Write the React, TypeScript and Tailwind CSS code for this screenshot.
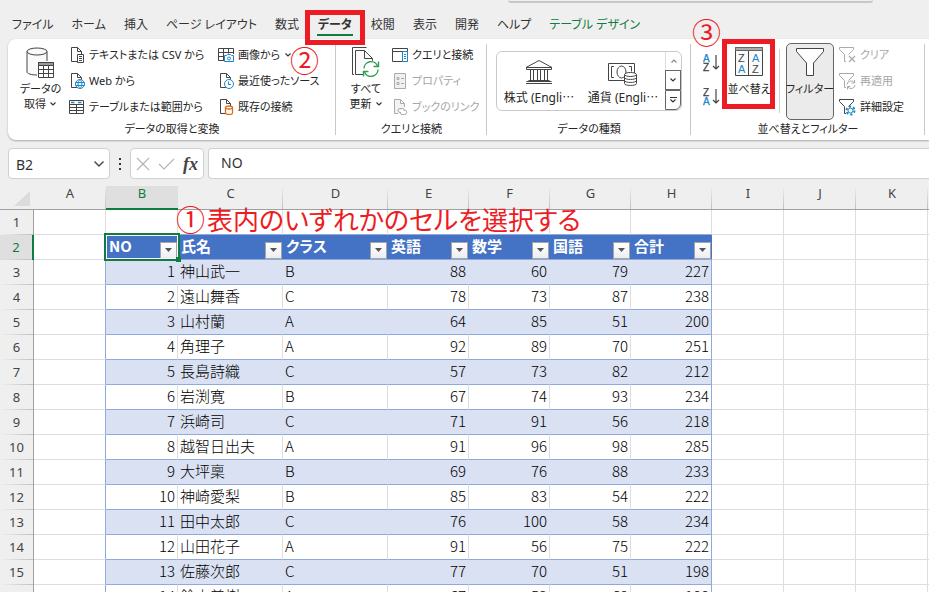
import type { ReactNode } from "react";

const UI = "font-['Noto_Sans','Noto_Sans_CJK_JP',sans-serif] [font-feature-settings:'palt']";

const TABS = [
  "ファイル", "ホーム", "挿入", "ページ レイアウト", "数式", "データ",
  "校閲", "表示", "開発", "ヘルプ", "テーブル デザイン",
];

const COLUMNS = [
  { name: "A", width: 72 },
  { name: "B", width: 72 },
  { name: "C", width: 105 },
  { name: "D", width: 105 },
  { name: "E", width: 81 },
  { name: "F", width: 81 },
  { name: "G", width: 81 },
  { name: "H", width: 81 },
  { name: "I", width: 72 },
  { name: "J", width: 72 },
  { name: "K", width: 72 },
  { name: "L", width: 72 },
];

const FIELDS = ["NO", "氏名", "クラス", "英語", "数学", "国語", "合計"];

const RECORDS: (string | number)[][] = [
  [1, "神山武一", "B", 88, 60, 79, 227],
  [2, "遠山舞香", "C", 78, 73, 87, 238],
  [3, "山村蘭", "A", 64, 85, 51, 200],
  [4, "角理子", "A", 92, 89, 70, 251],
  [5, "長島詩織", "C", 57, 73, 82, 212],
  [6, "岩渕寛", "B", 67, 74, 93, 234],
  [7, "浜崎司", "C", 71, 91, 56, 218],
  [8, "越智日出夫", "A", 91, 96, 98, 285],
  [9, "大坪稟", "B", 69, 76, 88, 233],
  [10, "神崎愛梨", "B", 85, 83, 54, 222],
  [11, "田中太郎", "C", 76, 100, 58, 234],
  [12, "山田花子", "A", 91, 56, 75, 222],
  [13, "佐藤次郎", "C", 77, 70, 51, 198],
  [14, "鈴木美樹", "A", 67, 53, 68, 188],
];

/* ---------- icons ---------- */

function Icon({ w = 16, h = 16, children }: { w?: number; h?: number; children: ReactNode }) {
  return (
    <svg width={w} height={h} viewBox={`0 0 ${w} ${h}`} fill="none" stroke="#444" className="shrink-0" aria-hidden="true">
      {children}
    </svg>
  );
}

const Chevron = () => (
  <svg width="8" height="6" viewBox="0 0 8 6" fill="none" stroke="#333" className="inline-block shrink-0" aria-hidden="true">
    <path d="M1.5 1.5 4 4l2.5-2.5" strokeWidth="1.1" />
  </svg>
);

const PageShape = () => <path d="M8 14.5H2.5V.5h6l4 4V7M8.5.5v4h4" />;

const DatabaseIcon = () => (
  <Icon w={30} h={32}>
    <path d="M1 4.5V25c0 1.600 4 3 10 3h10V4.500z" fill="#fafafa" stroke="none" />
    <ellipse cx="11" cy="4.5" rx="10" ry="3.5" fill="#fafafa" />
    <path d="M1 4.5V25c0 1.6 4 3 10 3M21 4.5V14" />
    <path d="M12.5 15.5h15v15h-15z" fill="#fff" />
    <path d="M12.5 15.5h15v3h-15z" fill="#999" />
    <path d="M12.5 22.5h15M12.5 26.5h15M17.5 18v12M22.5 18v12" />
  </Icon>
);

const TextFileIcon = () => (
  <Icon>
    <PageShape />
    <path d="M8.5 7.5h6v8h-6z" fill="#fff" />
    <path d="M10 9.5h3M10 11.5h3M10 13.5h3" />
  </Icon>
);

const WebIcon = () => (
  <Icon>
    <PageShape />
    <circle cx="11" cy="11" r="4.5" fill="#fff" stroke="#1e86c8" />
    <path d="M6.5 9.5h9M6.5 12.5h9M11 6.5c-2.6 3-2.6 6 0 9M11 6.5c2.6 3 2.6 6 0 9" stroke="#1e86c8" />
  </Icon>
);

const RangeIcon = () => (
  <Icon>
    <path d="M.5 1.5h14v13H.5zM.5 5.5h14M.5 8.5h14M.5 11.5h14M7.5 5.5v9" />
    <path d="M2 3.5h3.5M9 3.5h3.5" stroke="#1e86c8" strokeWidth="1.6" />
  </Icon>
);

const PictureIcon = () => (
  <Icon>
    <path d="M.5 1.5h15v12H.5zM.5 5.5h15M.5 9.5h8M5.5 1.5v12M10.5 1.5v5" />
    <path d="M6 7h10v9H6z" fill="#fff" stroke="none" />
    <path d="M6.5 8.5h2l1-1h3l1 1h2v6h-9z" stroke="#1e86c8" fill="#fff" />
    <circle cx="11" cy="11.5" r="1.5" stroke="#1e86c8" />
  </Icon>
);

const RecentIcon = () => (
  <Icon>
    <PageShape />
    <circle cx="11" cy="11" r="4.5" fill="#fff" stroke="#1e86c8" />
    <path d="M10.5 8.5v3H13" stroke="#1e86c8" />
  </Icon>
);

const ExistingIcon = () => (
  <Icon>
    <PageShape />
    <path d="M7.5 8.5V14c0 2 7 2 7 0V8.5" fill="#fff" stroke="#d86c16" strokeWidth="1.3" />
    <ellipse cx="11" cy="8.5" rx="3.5" ry="1.5" fill="#fff" stroke="#d86c16" strokeWidth="1.3" />
  </Icon>
);

const RefreshIcon = () => (
  <Icon w={30} h={32}>
    <path d="M3 27.5H1.5V.5h14" />
    <path d="M12 27.5H4.5v-24h9l8 8V15" fill="#fafafa" />
    <path d="M13.5 3.5v8h8" />
    <circle cx="20" cy="22" r="8.5" fill="#fff" stroke="none" />
    <path d="M13 21.5a7 7 0 0 1 13.5-2.5M27 22.5A7 7 0 0 1 13.5 25" stroke="#2f9e4f" strokeWidth="1.4" />
    <path d="M27.5 14.5v5h-5M12.5 29.5v-5h5" stroke="#2f9e4f" strokeWidth="1.4" />
  </Icon>
);

const QueryIcon = () => (
  <Icon>
    <path d="M.5 1.5h15v13H.5zM.5 4.5h15" />
    <path d="M10.5 4.5h5v10h-5z" stroke="#1e86c8" fill="#fff" />
    <path d="M12 7.5h2M12 9.5h2M12 11.5h2" stroke="#1e86c8" />
  </Icon>
);

const PropertyIcon = () => (
  <Icon>
    <path d="M2.5.5h11v15h-11z" stroke="#aaa" fill="#f0f0f0" />
    <path d="M5 4.5h2v2H5zM5 9.5h2v2H5zM9 5.5h3M9 10.5h3" stroke="#aaa" />
  </Icon>
);

const LinkIcon = () => (
  <Icon>
    <path d="M6 14.5H2.5V.5h6l4 4V8M8.5.5v4h4" stroke="#aaa" fill="#f3f3f3" />
    <path d="M9 13.5H8a2 2 0 0 1 0-4h2.5a2 2 0 0 1 2 2M11.5 11h1a2 2 0 0 1 0 4.5H10a2 2 0 0 1-2-2" stroke="#aaa" />
  </Icon>
);

const BankIcon = () => (
  <Icon w={28} h={26}>
    <path d="M1 8.5 14 1.5l13 7zM1.5 8.5v2h25v-2M3.5 21.5h21M1 24.5h26M1.5 22.5h25" />
    <path d="M5.5 11v10M8.5 11v10M12.5 11v10M15.5 11v10M19.5 11v10M22.5 11v10" />
  </Icon>
);

const CurrencyIcon = () => (
  <Icon w={32} h={28}>
    <path d="M1.5 4.5h26v17h-26z" />
    <path d="M7 7.5H4.5v11H7M22 7.5h2.5v5" />
    <ellipse cx="14.5" cy="13" rx="4.5" ry="6" />
    <path d="M17.5 15.5v9c0 2.6 12 2.6 12 0v-9" fill="#fff" />
    <ellipse cx="23.5" cy="15.5" rx="6" ry="2" fill="#fff" />
    <path d="M17.5 18.5c0 2.6 12 2.6 12 0M17.5 21.5c0 2.6 12 2.6 12 0" />
  </Icon>
);

function SortOrderIcon({ top, bottom }: { top: string; bottom: string }) {
  const color = (c: string) => (c === "A" ? "#1e86c8" : "#444");
  return (
    <svg width="17" height="18" viewBox="0 0 17 18" className="font-['Liberation_Sans',sans-serif] text-[10px]" aria-hidden="true">
      <text x="0" y="8" fill={color(top)} stroke={color(top)} strokeWidth=".3">{top}</text>
      <text x="0" y="17" fill={color(bottom)} stroke={color(bottom)} strokeWidth=".3">{bottom}</text>
      <path d="M13 1v14M10 12l3 3 3-3" fill="none" stroke="#444" strokeWidth="1.2" />
    </svg>
  );
}

const SortDialogIcon = () => (
  <svg width="28" height="29" viewBox="0 0 28 29" className="font-['Liberation_Sans',sans-serif] text-[11px]" aria-hidden="true">
    <path d="M.5.5h27v28H.5z" fill="#fafafa" stroke="#444" />
    <path d="M.5.5h27v3H.5z" fill="#aaa" stroke="#666" />
    <path d="M13.5 4v24" stroke="#444" />
    <text x="3" y="15" fill="#444">Z</text>
    <text x="3" y="26" fill="#1e86c8">A</text>
    <text x="17" y="15" fill="#1e86c8">A</text>
    <text x="17" y="26" fill="#444">Z</text>
  </svg>
);

const FilterIcon = () => (
  <Icon w={28} h={30}>
    <path d="M.5 1.5h27v3L17.5 16v12.5h-7V16L.5 4.5z" fill="#fff" />
  </Icon>
);

function SmallFilter({ muted, children }: { muted?: boolean; children: ReactNode }) {
  return (
    <Icon w={17} h={17}>
      <path d="M7 14.5H5.5v-7l-5-5v-2h14v2l-5 5" stroke={muted ? "#aaa" : "#444"} />
      {children}
    </Icon>
  );
}

const ClearIcon = () => (
  <SmallFilter muted><path d="m10 9 6 6M16 9l-6 6" stroke="#aaa" strokeWidth="1.3" /></SmallFilter>
);

const ReapplyIcon = () => (
  <SmallFilter muted>
    <path d="M8 11.5a4 4 0 0 1 7.5-1.5M16 12a4 4 0 0 1-7.5 1.5M15.5 7v3h-3M8.5 16.5v-3h3" stroke="#aaa" />
  </SmallFilter>
);

const AdvancedIcon = () => (
  <SmallFilter>
    <circle cx="11.5" cy="11.5" r="4" stroke="#1e86c8" strokeWidth="2" strokeDasharray="2.2 2" />
    <circle cx="11.5" cy="11.5" r="2.5" stroke="#1e86c8" />
  </SmallFilter>
);

/* ---------- ribbon ---------- */

function SmallCommand({ icon, label, disabled, menu }: { icon: ReactNode; label: string; disabled?: boolean; menu?: boolean }) {
  return (
    <button disabled={disabled} className="flex h-[26px] items-center gap-1 whitespace-nowrap text-[#262626] disabled:text-[#a6a6a6]">
      {icon}
      {label}
      {menu && <Chevron />}
    </button>
  );
}

function BigCommand({ icon, lines, className = "" }: { icon: ReactNode; lines: string[]; className?: string }) {
  return (
    <button className={`flex shrink-0 flex-col items-center leading-[15px] whitespace-nowrap ${className}`}>
      <span className="mb-[2px] flex h-8 items-start">{icon}</span>
      {lines[0]}
      {lines[1] && <span className="flex items-center gap-[3px]">{lines[1]}<Chevron /></span>}
    </button>
  );
}

function Group({ label, className, children }: { label: string; className: string; children: ReactNode }) {
  return (
    <section aria-label={label} className={`relative flex shrink-0 flex-col ${className}`}>
      <div className="flex h-[78px]">{children}</div>
      <p className="text-center leading-[18px]">{label}</p>
      <span className="absolute top-[2px] right-0 bottom-[3px] w-px bg-[#c8c8c8]" />
    </section>
  );
}

function DataType({ icon, label }: { icon: ReactNode; label: string }) {
  return (
    <button className="flex flex-1 flex-col items-center justify-between pt-[7px] pb-1 text-xs leading-4 whitespace-nowrap">
      {icon}
      <span>{label}<span className="font-['Noto_Sans_CJK_JP',sans-serif]">…</span></span>
    </button>
  );
}

function Ribbon() {
  return (
    <div className="ml-2 flex shrink-0 overflow-hidden rounded-l-lg bg-white pt-[3px] pb-[2px] text-[11px] text-[#262626] shadow-[0_1px_2px_rgba(0,0,0,0.3)]">
      <Group label="データの取得と変換" className="w-[328px]">
        <BigCommand icon={<DatabaseIcon />} lines={["データの", "取得"]} className="w-[61px] pt-[5px] pl-1" />
        <div className="flex w-[149px] flex-col items-start">
          <SmallCommand icon={<TextFileIcon />} label="テキストまたは CSV から" />
          <SmallCommand icon={<WebIcon />} label="Web から" />
          <SmallCommand icon={<RangeIcon />} label="テーブルまたは範囲から" />
        </div>
        <div className="flex flex-col items-start">
          <SmallCommand icon={<PictureIcon />} label="画像から" menu />
          <SmallCommand icon={<RecentIcon />} label="最近使ったソース" />
          <SmallCommand icon={<ExistingIcon />} label="既存の接続" />
        </div>
      </Group>

      <Group label="クエリと接続" className="w-[151px]">
        <BigCommand icon={<RefreshIcon />} lines={["すべて", "更新"]} className="w-14 pt-[5px] pl-1" />
        <div className="flex flex-col items-start">
          <SmallCommand icon={<QueryIcon />} label="クエリと接続" />
          <SmallCommand icon={<PropertyIcon />} label="プロパティ" disabled />
          <SmallCommand icon={<LinkIcon />} label="ブックのリンク" disabled />
        </div>
      </Group>

      <Group label="データの種類" className="w-[204px]">
        <div className="mx-[9px] my-[9px] flex flex-1 rounded-md border border-[#c8c8c8]">
          <DataType icon={<BankIcon />} label="株式 (Engli" />
          <DataType icon={<CurrencyIcon />} label="通貨 (Engli" />
          <div className="flex w-4 flex-col">
            <button aria-label="前へ" className="flex flex-1 items-center justify-center border-l border-[#c8c8c8] opacity-60">
              <span className="flex rotate-180"><Chevron /></span>
            </button>
            <button aria-label="次へ" className="flex flex-1 items-center justify-center border border-[#666]"><Chevron /></button>
            <button aria-label="その他" className="flex flex-1 flex-col items-center justify-center rounded-br-md border border-[#666]">
              <span className="h-px w-[7px] bg-[#333]" />
              <Chevron />
            </button>
          </div>
        </div>
      </Group>

      <Group label="並べ替えとフィルター" className="w-[234px]">
        <div className="flex w-8 flex-col items-end justify-between pt-3 pr-[3px] pb-[14px]">
          <button aria-label="昇順" className="flex"><SortOrderIcon top="A" bottom="Z" /></button>
          <button aria-label="降順" className="flex"><SortOrderIcon top="Z" bottom="A" /></button>
        </div>
        <BigCommand icon={<SortDialogIcon />} lines={["並べ替え"]} className="w-[52px] pt-[5px]" />
        <span className="my-[7px] mr-[6px] ml-1 w-px bg-[#d0d0d0]" />
        <BigCommand icon={<FilterIcon />} lines={["フィルター"]} className="mt-px w-12 rounded-[5px] border border-[#666] bg-[#ebebeb] pt-[3px]" />
        <div className="ml-[5px] flex flex-col items-start">
          <SmallCommand icon={<ClearIcon />} label="クリア" disabled />
          <SmallCommand icon={<ReapplyIcon />} label="再適用" disabled />
          <SmallCommand icon={<AdvancedIcon />} label="詳細設定" />
        </div>
      </Group>
    </div>
  );
}

function TabBar() {
  return (
    <nav className="flex h-[39px] shrink-0 items-end gap-[18px] pb-1 pl-3 text-xs whitespace-nowrap text-[#333]">
      {TABS.map((tab) => {
        if (tab === "データ") {
          return (
            <button key={tab} className="relative h-5 px-px leading-5 font-bold" aria-current="page">
              {tab}
              <span className="absolute -bottom-px left-0 h-[2px] w-full bg-[#107c41]" />
              <span className="absolute -inset-x-3 -top-[5px] -bottom-[10px] z-10 border-[5px] border-[#ed1c24]" />
            </button>
          );
        }
        return (
          <button key={tab} className={tab === "テーブル デザイン" ? "h-5 leading-5 text-[#107c41]" : "h-5 leading-5"}>
            {tab}
          </button>
        );
      })}
    </nav>
  );
}

function FormulaBar() {
  return (
    <div className="mt-2 mb-[7px] flex h-[31px] shrink-0 pl-2">
      <div className="flex w-[102px] items-center rounded border border-[#d0d0d0] bg-white pr-1 pl-[7px]">
        <input aria-label="名前ボックス" defaultValue="B2" className="w-full min-w-0 pt-[3px] text-sm text-[#333] outline-none" />
        <Icon w={12} h={8}><path d="M1.5 1.5 6 6l4.5-4.5" strokeWidth="1.4" /></Icon>
      </div>
      <span className="mx-[9px] flex w-[2px] flex-col justify-center gap-[3px]">
        <span className="size-[2px] bg-[#333]" />
        <span className="size-[2px] bg-[#333]" />
        <span className="size-[2px] bg-[#333]" />
      </span>
      <div className="flex w-[74px] items-center justify-between rounded border border-[#d0d0d0] bg-white px-[5px]">
        <button aria-label="キャンセル"><Icon w={14} h={14}><path d="m1 1 12 12M13 1 1 13" stroke="#b5b5b5" strokeWidth="1.2" /></Icon></button>
        <button aria-label="入力"><Icon w={17} h={12}><path d="m1 6 5 5L16 1" stroke="#b5b5b5" strokeWidth="1.2" /></Icon></button>
        <button aria-label="関数の挿入" className="font-['Liberation_Serif',serif] text-lg leading-6 font-bold text-[#444] italic">fx</button>
      </div>
      <input aria-label="数式バー" defaultValue="NO" className="ml-1 min-w-0 flex-1 rounded-l border border-r-0 border-[#d0d0d0] bg-white pb-[2px] pl-3 text-sm text-[#333] outline-none" />
    </div>
  );
}

/* ---------- sheet ---------- */

const ROW_HEAD = "h-[25px] border-r bg-[linear-gradient(to_right,transparent,#c0c0c0)] bg-[length:100%_1px] bg-bottom bg-no-repeat p-0 pb-[2px] text-center text-[13px] font-normal";
const GRID = "h-[25px] border-r border-b border-[#dedede] p-0";

function FilterButton({ field }: { field: string }) {
  return (
    <button aria-label={`${field}のフィルター`} className="flex size-[17px] shrink-0 items-center justify-center border border-[#a5a5a5] bg-linear-to-b from-white to-[#eceef2]">
      <svg width="7" height="4" viewBox="0 0 7 4" fill="#555" aria-hidden="true"><path d="M0 0h7L3.5 4z" /></svg>
    </button>
  );
}

function RowHead({ n }: { n: number }) {
  return (
    <th
      scope="row"
      className={`${ROW_HEAD} font-['Noto_Sans',sans-serif] ${n === 2 ? "border-r-2 border-[#107c41] bg-[#dfdfdf] text-[#107c41]" : "border-[#a0a0a0] bg-[#efefef] text-[#444]"}`}
    >
      {n}
    </th>
  );
}

function Sheet() {
  return (
    <table className="w-[1000px] shrink-0 table-fixed border-separate border-spacing-0 bg-white font-['Noto_Sans_CJK_JP',sans-serif] text-[15px] leading-5 font-light text-black">
      <colgroup>
        <col style={{ width: 34 }} />
        {COLUMNS.map((c) => <col key={c.name} style={{ width: c.width }} />)}
      </colgroup>
      <thead className="bg-[#efefef]">
        <tr>
          <td className="h-6 border-b border-[#a0a0a0] p-0">
            <svg width="33" height="23" viewBox="0 0 33 23" className="block" aria-hidden="true"><path d="M14 20h16V5z" fill="#dcdcdc" /></svg>
          </td>
          {COLUMNS.map((c) => (
            <th
              key={c.name}
              scope="col"
              className={
                c.name === "B"
                  ? "h-6 border-b-2 border-[#107c41] bg-[#dfdfdf] p-0 pb-[7px] font-['Noto_Sans',sans-serif] text-[13px] leading-[15px] font-normal text-[#107c41]"
                  : "h-6 border-b border-[#a0a0a0] bg-[linear-gradient(to_bottom,transparent,#c0c0c0)] bg-[length:1px_100%] bg-right bg-no-repeat p-0 pb-2 font-['Noto_Sans',sans-serif] text-[13px] leading-[15px] font-normal text-[#444]"
              }
            >
              {c.name}
            </th>
          ))}
        </tr>
      </thead>
      <tbody>
        <tr>
          <RowHead n={1} />
          {COLUMNS.map((c, i) => (
            <td key={c.name} className={i >= 1 && i <= 7 ? "h-[25px] border-r border-b border-r-[#dedede] border-b-[#8ea9db] p-0" : GRID} />
          ))}
        </tr>
        <tr>
          <RowHead n={2} />
          <td className="h-[25px] border-r border-b border-r-[#8ea9db] border-b-[#dedede] p-0" />
          {FIELDS.map((field, i) => (
            <th key={field} scope="col" className="relative h-[25px] border-b border-[#8ea9db] bg-[#4472c4] p-0 text-left font-bold text-white">
              <div className="flex items-end justify-between pr-px pl-[3px]">
                <span className="pb-[3px] leading-5">{field}</span>
                <FilterButton field={field} />
              </div>
              {i === 0 && (
                <span className="absolute -inset-[2px] z-10 border-2 border-[#107c41] outline -outline-offset-[3px] outline-white">
                  <span className="absolute -right-[3px] -bottom-[3px] size-[5px] bg-[#107c41]" />
                </span>
              )}
            </th>
          ))}
          {[8, 9, 10, 11].map((i) => <td key={i} className={GRID} />)}
        </tr>
        {RECORDS.map((record, r) => {
          const striped = r % 2 === 0;
          return (
            <tr key={r}>
              <RowHead n={r + 3} />
              <td className="h-[25px] border-r border-b border-r-[#8ea9db] border-b-[#dedede] p-0" />
              {record.map((value, i) => {
                const edge = i === 6 ? "border-r-[#8ea9db]" : striped ? "border-r-[#d9e1f2]" : "border-r-[#dedede]";
                return (
                  <td
                    key={i}
                    className={`h-[25px] border-r border-b border-b-[#8ea9db] px-[2px] pt-0 pb-[2px] whitespace-nowrap ${edge} ${striped ? "bg-[#d9e1f2]" : ""} ${typeof value === "number" ? "text-right" : ""}`}
                  >
                    {value}
                  </td>
                );
              })}
              {[8, 9, 10, 11].map((i) => <td key={i} className={GRID} />)}
            </tr>
          );
        })}
      </tbody>
    </table>
  );
}

export default function App() {
  return (
    <div lang="ja" className={`relative flex h-screen flex-col overflow-hidden bg-[#efefef] ${UI}`}>
      <span className="absolute top-0 right-14 left-[508px] h-[3px] rounded-b-md border-b-2 border-[#c8c8c8]" />
      <TabBar />
      <Ribbon />
      <FormulaBar />
      <Sheet />

      {/* 手順の注釈 */}
      <p className="absolute top-[200px] left-[176px] z-20 flex gap-[2px] text-[26px] leading-10 whitespace-nowrap text-[#ed1c24]">
        <span className="text-[29px]">①</span>
        表内のいずれかのセルを選択する
      </p>
      <span className="absolute top-[41px] left-[290px] z-20 text-[29px] leading-10 text-[#ed1c24]">②</span>
      <span className="absolute top-[13px] left-[692px] z-20 text-[29px] leading-10 text-[#ed1c24]">③</span>
      <span className="absolute top-[39px] left-[722px] z-20 h-[70px] w-[53px] border-[5px] border-[#ed1c24]" />
    </div>
  );
}
